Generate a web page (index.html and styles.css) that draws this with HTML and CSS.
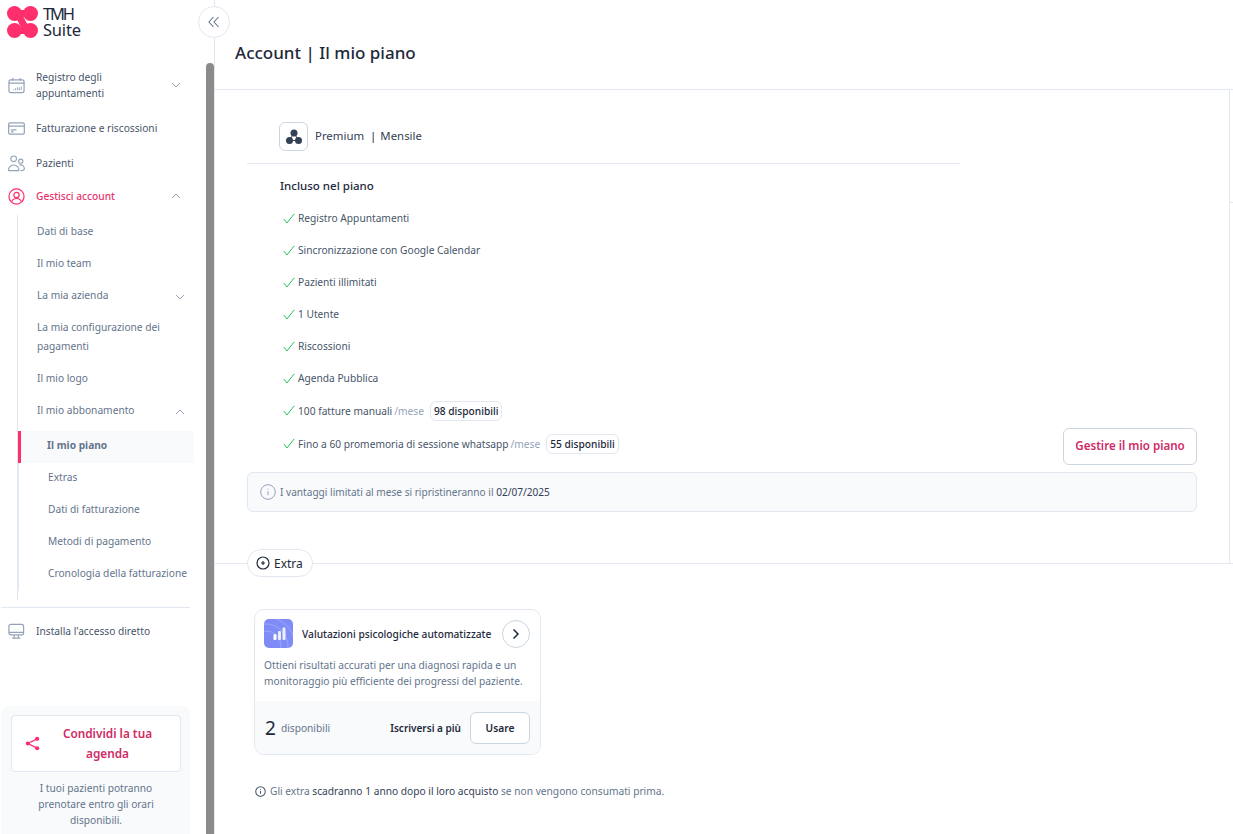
FILE: index.html
```html
<!DOCTYPE html>
<html lang="it">
<head>
<meta charset="utf-8">
<title>Account | Il mio piano</title>
<link rel="stylesheet" href="styles.css">
</head>
<body>
<div class="app">
  <aside class="sidebar">
    <div class="brand">
      <svg class="logo" width="31" height="32" viewBox="0 0 31 32"><g fill="#ff2e6d"><circle cx="7.500" cy="7.500" r="7.500"/><circle cx="23.500" cy="7.500" r="7.500"/><circle cx="7.500" cy="24.500" r="7.500"/><circle cx="23.500" cy="24.500" r="7.500"/></g><path d="M23.500 7.500H7.500C15 7.500 15 24.500 23.500 24.500H7.500" fill="none" stroke="#ff2e6d" stroke-width="7"/></svg>
      <div class="brand-name"><span class="tmh">TMH</span><br>Suite</div>
    </div>
    <nav class="nav">
      <div class="nav-item tall">
        <svg class="ico" viewBox="0 0 18 18" fill="none" stroke="#94a3b8" stroke-width="1.300"><rect x="1" y="3" width="16" height="13.500" rx="2"/><path d="M1 6.500h16M5 1v3M13 1v3"/><path d="M6 14v-1M8 14v-2M10 14v-3M12 14v-3M14 14v-4" stroke-width="1"/></svg>
        <span class="nav-text">Registro degli appuntamenti</span>
        <svg class="chev" viewBox="0 0 10 6"><path d="M1 1l4 4 4-4"/></svg>
      </div>
      <div class="nav-item billing">
        <svg class="ico" viewBox="0 0 18 18" fill="none" stroke="#94a3b8" stroke-width="1.300"><rect x=".7" y="3" width="16.600" height="12" rx="1.500"/><path d="M.7 6.500h16.600M3 12.500h3M3 10.500h6"/></svg>
        <span class="nav-text">Fatturazione e riscossioni</span>
      </div>
      <div class="nav-item patients">
        <svg class="ico" viewBox="0 0 18 18" fill="none" stroke="#94a3b8" stroke-width="1.200"><circle cx="6" cy="4" r="3"/><circle cx="13.500" cy="6.500" r="2.200"/><path d="M.8 16.500c-.5-1.500 0-3 1-4 2-2.500 6.500-2.500 8.500 0 1 1 1.500 2.500 1 4zM12 10.500c3-.5 5.500 1 5.300 4.500-.2 1.200-1.500 1.500-4 1.500"/></svg>
        <span class="nav-text">Pazienti</span>
      </div>
      <div class="nav-item active-group">
        <svg class="ico" viewBox="0 0 18 18" fill="none" stroke="#ff2e6d" stroke-width="1.300"><circle cx="9" cy="9" r="8"/><circle cx="9" cy="7.500" r="2.800"/><path d="M4 14.500c1-4.500 9-4.500 10 0"/></svg>
        <span class="nav-text strong">Gestisci account</span>
        <svg class="chev" viewBox="0 0 10 6"><path d="M1 5l4-4 4 4"/></svg>
      </div>
      <div class="subnav">
        <div class="sub-item">Dati di base</div>
        <div class="sub-item">Il mio team</div>
        <div class="sub-item">La mia azienda<svg class="chev sub-chev" viewBox="0 0 10 6"><path d="M1 1l4 4 4-4"/></svg></div>
        <div class="sub-item wrap">La mia configurazione dei pagamenti</div>
        <div class="sub-item">Il mio logo</div>
        <div class="sub-item">Il mio abbonamento<svg class="chev sub-chev" viewBox="0 0 10 6"><path d="M1 5l4-4 4 4"/></svg></div>
        <div class="subsub">
          <div class="subsub-item current">Il mio piano</div>
          <div class="subsub-item">Extras</div>
          <div class="subsub-item">Dati di fatturazione</div>
          <div class="subsub-item">Metodi di pagamento</div>
          <div class="subsub-item">Cronologia della fatturazione</div>
        </div>
      </div>
      <div class="nav-divider"></div>
      <div class="nav-item install">
        <svg class="ico" viewBox="0 0 18 18" fill="none" stroke="#94a3b8" stroke-width="1.300"><rect x="1" y="1.500" width="15.500" height="11" rx="2"/><path d="M1 10h15.500M6.500 13v2.500M11 13v2.500M4.500 16h8.500"/></svg>
        <span class="nav-text">Installa l'accesso diretto</span>
      </div>
    </nav>
    <div class="share-card">
      <div class="share-btn">
        <svg class="share-ico" viewBox="0 0 16 16" fill="#ff2e6d"><circle cx="13" cy="3" r="2.200"/><circle cx="3" cy="8" r="2.200"/><circle cx="13" cy="13" r="2.200"/><path d="M13 3L3 8l10 5" fill="none" stroke="#ff2e6d" stroke-width="1.400"/></svg>
        <span class="share-label">Condividi la tua agenda</span>
      </div>
      <p class="share-text">I tuoi pazienti potranno prenotare entro gli orari disponibili.</p>
    </div>
    <div class="scroll-thumb"></div>
  </aside>
  <button class="collapse" aria-label="Comprimi">
    <svg viewBox="0 0 12 12" width="12" height="12" fill="none" stroke="#64748b" stroke-width="1.100"><path d="M5.500 1L1 6l4.500 5M10.500 1L6 6l4.500 5"/></svg>
  </button>
  <main class="main">
    <header class="page-head"><h1>Account | Il mio piano</h1></header>
    <section class="plan">
      <div class="plan-box">
        <div class="plan-title">
          <span class="plan-icon"><svg viewBox="0 0 18 18" width="18" height="18"><path d="M9 5L4.500 12.500h9z" fill="none" stroke="#334155" stroke-width="1"/><g fill="#334155"><circle cx="9" cy="5" r="3.500"/><circle cx="4.500" cy="12.500" r="3.500"/><circle cx="13.500" cy="12.500" r="3.500"/></g></svg></span>
          <span>Premium</span><span class="bar">|</span><span>Mensile</span>
        </div>
        <h2 class="included">Incluso nel piano</h2>
        <ul class="features">
          <li><svg class="check" viewBox="0 0 12 11"><path d="M.8 6l3.200 4L11.200 .8"/></svg>Registro Appuntamenti</li>
          <li><svg class="check" viewBox="0 0 12 11"><path d="M.8 6l3.200 4L11.200 .8"/></svg>Sincronizzazione con Google Calendar</li>
          <li><svg class="check" viewBox="0 0 12 11"><path d="M.8 6l3.200 4L11.200 .8"/></svg>Pazienti illimitati</li>
          <li><svg class="check" viewBox="0 0 12 11"><path d="M.8 6l3.200 4L11.200 .8"/></svg>1 Utente</li>
          <li><svg class="check" viewBox="0 0 12 11"><path d="M.8 6l3.200 4L11.200 .8"/></svg>Riscossioni</li>
          <li><svg class="check" viewBox="0 0 12 11"><path d="M.8 6l3.200 4L11.200 .8"/></svg>Agenda Pubblica</li>
          <li class="limited"><svg class="check" viewBox="0 0 12 11"><path d="M.8 6l3.200 4L11.200 .8"/></svg>100 fatture manuali<span class="per">/mese</span><span class="avail">98 disponibili</span></li>
          <li class="limited"><svg class="check" viewBox="0 0 12 11"><path d="M.8 6l3.200 4L11.200 .8"/></svg>Fino a 60 promemoria di sessione whatsapp<span class="per">/mese</span><span class="avail">55 disponibili</span></li>
        </ul>
        <button class="manage">Gestire il mio piano</button>
        <div class="notice">
          <svg class="info" viewBox="0 0 16 16" fill="none" stroke="#94a3b8"><circle cx="8" cy="8" r="7.300"/><path d="M8 7.200v4M8 4.500v1"/></svg>
          <span>I vantaggi limitati al mese si ripristineranno il <b>02/07/2025</b></span>
        </div>
      </div>
      <div class="side-rail"><i></i></div>
    </section>
    <section class="extras">
      <div class="extra-pill">
        <svg viewBox="0 0 14 14" width="14" height="14" fill="none" stroke="#1e293b" stroke-width="1.200"><circle cx="7" cy="7" r="6"/><path d="M7 5v4M5 7h4"/></svg>
        Extra
      </div>
      <article class="extra-card">
        <div class="extra-head">
          <span class="extra-icon"><svg viewBox="0 0 29 29" width="29" height="29"><rect width="29" height="29" rx="5" fill="#7f8cf7"/><g fill="none" stroke="#a3adf9" stroke-width=".8"><circle cx="2" cy="27" r="15"/><circle cx="2" cy="27" r="22"/><circle cx="2" cy="27" r="29"/></g><g fill="#fff"><rect x="9.500" y="15" width="3" height="6" rx="1"/><rect x="14" y="12" width="3" height="9" rx="1" opacity=".85"/><rect x="18.500" y="8.500" width="3" height="12.500" rx="1" opacity=".85"/></g></svg></span>
          <h3>Valutazioni psicologiche automatizzate</h3>
          <span class="round-arrow"><svg viewBox="0 0 8 12" width="8" height="12" fill="none" stroke="#1e293b" stroke-width="1.500"><path d="M1.500 1.500L6 6l-4.500 4.500"/></svg></span>
        </div>
        <p class="extra-desc">Ottieni risultati accurati per una diagnosi rapida e un monitoraggio più efficiente dei progressi del paziente.</p>
        <div class="extra-foot">
          <span class="count">2</span><span class="count-label">disponibili</span>
          <span class="subscribe">Iscriversi a più</span>
          <button class="use">Usare</button>
        </div>
      </article>
      <p class="footnote">
        <svg viewBox="0 0 12 12" width="11" height="11" fill="none" stroke="#475569" stroke-width="1.100"><circle cx="6" cy="6" r="5.200"/><path d="M6 5.500v3M6 3.200v1"/></svg>
        <span>Gli extra <em>scadranno 1 anno dopo il loro acquisto</em> se non vengono consumati prima.</span>
      </p>
    </section>
  </main>
</div>
</body>
</html>
```

FILE: styles.css
```css
* { box-sizing: border-box; }
html, body { margin: 0; height: 100%; overflow: hidden; background: #fff; }
body { font-family: "Noto Sans", "Open Sans", sans-serif; color: #475569; font-size: 10.2px; }
.app { display: flex; height: 834px; width: 1233px; position: relative; overflow: hidden; }

.sidebar { width: 215px; flex: none; height: 834px; position: relative; border-right: 1px solid #e2e8f0; display: flex; flex-direction: column; overflow: hidden; }
.scroll-thumb { position: absolute; left: 206px; top: 63px; bottom: -20px; width: 8px; background: #8b8b8b; border-radius: 4px 4px 0 0; }

.brand { display: flex; align-items: flex-start; gap: 5px; padding: 6px 0 0 7px; height: 61px; }
.logo { display: block; }
.brand-name { font-size: 16.500px; line-height: 16px; color: #1e293b; letter-spacing: -.2px; }
.tmh { letter-spacing: -2.200px; }

.nav { width: 190px; display: flex; flex-direction: column; }
.nav-item { display: flex; align-items: center; position: relative; padding-left: 8px; color: #475569; font-size: 10.200px; }
.nav-item.tall { height: 48px; }
.nav-item.billing { height: 32px; margin-top: 3px; }
.nav-item.patients { height: 32px; margin-top: 3px; }
.nav-item.active-group { height: 32px; margin-top: 1px; }
.nav-item.install { height: 32px; margin-top: 7px; }
.ico { width: 17px; height: 17px; flex: none; margin-right: 11px; }
.nav-text { line-height: 16px; width: 118px; }
.nav-item.billing .nav-text, .nav-item.install .nav-text { width: auto; white-space: nowrap; }
.nav-item .strong { color: #e8356f; font-weight: 500; }
.chev { width: 10px; height: 6px; fill: none; stroke: #94a3b8; stroke-width: 1; }
.nav-item .chev { position: absolute; left: 171px; top: 50%; margin-top: -3px; }

.subnav { margin-left: 17px; margin-top: 3px; border-left: 1px solid #e2e8f0; padding-bottom: 9px; width: 177px; position: relative; }
.sub-item { height: 32px; line-height: 32px; padding-left: 19px; font-size: 10.200px; color: #64748b; position: relative; }
.sub-item.wrap { height: 51px; line-height: 19px; padding-top: 7px; }
.sub-chev { position: absolute; left: 157px; top: 15px; }
.subsub { border-left: 1px solid #e2e8f0; margin-top: 5px; height: 160px; }
.subsub-item { height: 32px; line-height: 28px; padding-left: 29px; font-size: 10.200px; color: #64748b; white-space: nowrap; }
.subsub-item.current { background: #f8fafc; margin-left: -1px; border-left: 3px solid #ff2e6d; padding-left: 26px; font-weight: 700; }
.nav-divider { height: 1px; background: #e2e8f0; margin: 7px 0 0 1px; }

.share-card { position: absolute; left: 1px; top: 706px; width: 189px; height: 140px; background: #f8fafc; border-radius: 8px; padding: 9px 9px 9px 10px; }
.share-btn { height: 57px; background: #fff; border: 1px solid #e2e8f0; border-radius: 4px; display: flex; align-items: center; padding: 0 13px 0 13px; }
.share-ico { width: 15px; height: 15px; flex: none; }
.share-label { flex: 1; text-align: center; font-size: 11.800px; font-weight: 600; line-height: 20px; color: #d02b66; padding: 0 6px 2px 14px; }
.share-text { margin: 8px 0 0; font-size: 10.200px; line-height: 16px; text-align: center; color: #64748b; padding: 0 8px; }

.collapse { position: absolute; left: 198px; top: 6px; width: 32px; height: 32px; border-radius: 50%; border: 1px solid #e2e8f0; background: #fff; padding: 0; display: flex; align-items: center; justify-content: center; z-index: 2; }

.main { flex: 1; min-width: 0; display: flex; flex-direction: column; }
.page-head { height: 90px; border-bottom: 1px solid #e2e8f0; padding: 41px 0 0 20px; }
h1 { margin: 0; font-size: 17px; line-height: 24px; font-weight: 500; color: #1e293b; }

.plan { height: 474px; flex: none; display: flex; border-bottom: 1px solid #e2e8f0; }
.plan-box { width: 1014px; padding: 32px 32px 0 32px; position: relative; flex: none; }
.side-rail { width: 4px; border-left: 1px solid #e2e8f0; position: relative; flex: none; }
.side-rail i { position: absolute; left: 0; right: 0; top: 112px; height: 1px; background: #e2e8f0; }
.plan-title { width: 713px; height: 42px; border-bottom: 1px solid #e2e8f0; display: flex; align-items: flex-start; padding-left: 32px; font-size: 11.400px; line-height: 28px; color: #334155; }
.plan-icon { width: 29px; height: 29px; border: 1px solid #cbd5e1; border-radius: 6px; display: flex; align-items: center; justify-content: center; margin-right: 7px; }
.bar { margin: 0 4px 0 6px; color: #1e293b; }
.included { margin: 13px 0 0 33px; font-size: 11.500px; line-height: 17px; font-weight: 500; color: #1e293b; }
.features { list-style: none; margin: 8px 0 0 36px; padding: 0; }
.features li { height: 32px; display: flex; align-items: center; font-size: 10.200px; color: #475569; white-space: nowrap; }
.features li.limited { height: 33px; }
.check { width: 12px; height: 11px; fill: none; stroke: #22c55e; stroke-width: 1; flex: none; margin-right: 3px; }
.per { color: #94a3b8; margin-left: 2px; }
.avail { margin-left: 6px; height: 20px; line-height: 18px; border: 1px solid #e2e8f0; border-radius: 6px; padding: 0 3px; color: #1e293b; font-weight: 500; }
.manage { position: absolute; right: 32px; top: 338px; width: 134px; height: 37px; background: #fff; border: 1px solid #cbd5e1; border-radius: 6px; color: #d02b66; font: 600 11.600px "Noto Sans", sans-serif; padding: 0 0 2px; }
.notice { position: absolute; left: 32px; right: 32px; top: 382px; height: 40px; background: #f8fafc; border: 1px solid #e2e8f0; border-radius: 6px; display: flex; align-items: center; padding-left: 12px; font-size: 10.100px; color: #64748b; }
.notice b { font-weight: 400; color: #334155; }
.info { width: 16px; height: 16px; margin-right: 4px; flex: none; }

.extras { position: relative; flex: 1; padding: 45px 0 0 39px; }
.extra-pill { position: absolute; left: 32px; top: -15px; height: 28px; width: 66px; background: #fff; border: 1px solid #e2e8f0; border-radius: 14px; display: flex; align-items: center; gap: 4px; padding-left: 8px; font-size: 12px; color: #1e293b; }
.extra-card { width: 287px; height: 146px; border: 1px solid #e2e8f0; border-radius: 10px; overflow: hidden; display: flex; flex-direction: column; }
.extra-head { display: flex; align-items: center; padding: 9px 10px 0 9px; height: 38px; }
.extra-icon { width: 29px; height: 29px; flex: none; margin-right: 9px; }
.extra-head h3 { margin: 0; flex: 1; font-size: 10.200px; font-weight: 500; color: #1e293b; white-space: nowrap; }
.round-arrow { width: 28px; height: 28px; border: 1px solid #cbd5e1; border-radius: 50%; display: flex; align-items: center; justify-content: center; flex: none; }
.extra-desc { margin: 9px 0 0; padding: 0 9px; font-size: 10.200px; line-height: 16px; color: #64748b; height: 44px; }
.extra-foot { flex: 1; background: #f8fafc; display: flex; align-items: center; padding: 0 10px; }
.count { font-size: 19px; line-height: 24px; color: #1e293b; margin-right: 5px; }
.count-label { color: #64748b; font-size: 10.200px; flex: 1; }
.subscribe { font-size: 10px; font-weight: 600; color: #1e293b; margin-right: 9px; }
.use { width: 60px; height: 32px; background: #fff; border: 1px solid #cbd5e1; border-radius: 6px; font: 600 10.200px "Noto Sans", sans-serif; color: #1e293b; padding: 0; }
.footnote { margin: 28px 0 0 1px; display: flex; align-items: center; gap: 4px; font-size: 10.200px; color: #64748b; height: 16px; }
.footnote em { font-style: normal; color: #334155; }
```
